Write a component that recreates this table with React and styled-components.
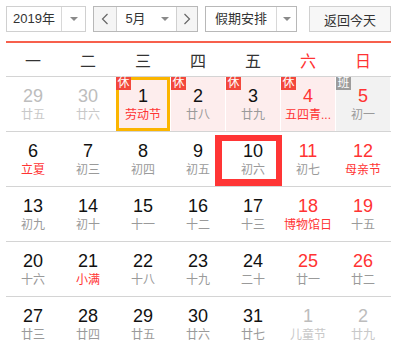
import React from "react";
import styled, { createGlobalStyle, css } from "styled-components";

const GlobalStyle = createGlobalStyle`
  html, body { margin: 0; padding: 0; background: #fff; }
  body {
    font-family: "Liberation Sans", "Noto Sans CJK SC", sans-serif;
    color: #333;
  }
  * { box-sizing: border-box; }
`;

const Wrapper = styled.div`
  width: 396px;
  padding: 6px 5px 0 6px;
`;

const Toolbar = styled.div`
  display: flex;
  align-items: stretch;
  height: 26px;
  width: 385px;
`;

const Select = styled.div`
  display: flex;
  align-items: stretch;
  width: ${(p) => p.$w}px;
  margin-right: ${(p) => p.$mr || 0}px;
  border: 1px solid ${(p) => p.$bc || "#d0d0d0"};
  background: #fff;
  font-size: 13px;
  color: #333;
`;

const SelectText = styled.div`
  flex: 1;
  display: flex;
  align-items: center;
  justify-content: center;
  line-height: 24px;
`;

const ArrowBox = styled.div`
  width: ${(p) => p.$w}px;
  display: flex;
  align-items: center;
  justify-content: center;
  border-left: ${(p) => (p.$divider ? "1px solid #d8d8d8" : "none")};
`;

const Caret = styled.span`
  width: 0;
  height: 0;
  border-left: 4px solid transparent;
  border-right: 4px solid transparent;
  border-top: 4px solid #8a8a8a;
`;

const StepButton = styled.div`
  width: ${(p) => p.$w}px;
  display: flex;
  align-items: center;
  justify-content: center;
  background: #f5f5f5;
  ${(p) => (p.$left ? "border-right: 1px solid #d0d0d0;" : "border-left: 1px solid #d0d0d0;")}
`;

const TodayButton = styled.div`
  margin-left: auto;
  width: 82px;
  border: 1px solid #d0d0d0;
  background: #f7f7f7;
  font-size: 13px;
  color: #333;
  display: flex;
  align-items: center;
  justify-content: center;
`;

const RedLine = styled.div`
  width: 385px;
  height: 2px;
  margin-top: 9px;
  background: #f7604c;
`;

const Grid7 = styled.div`
  display: grid;
  grid-template-columns: repeat(7, 54px);
  column-gap: 1px;
  width: 385px;
`;

const WeekHead = styled(Grid7)`
  height: 33px;
  border-bottom: 1px solid #d4d4d4;
  box-sizing: content-box;
`;

const WeekLabel = styled.div`
  display: flex;
  align-items: center;
  justify-content: center;
  font-size: 16px;
  color: ${(p) => (p.$red ? "#f33" : "#333")};
`;

const WeekRow = styled(Grid7)`
  height: 54px;
  box-sizing: content-box;
  border-top: ${(p) => (p.$first ? "none" : "1px solid #d4d4d4")};
`;

const Cell = styled.div`
  position: relative;
  height: 54px;
  padding-top: 8px;
  display: flex;
  flex-direction: column;
  align-items: center;
  background: ${(p) => (p.$tag === "休" ? "#fdeded" : p.$tag === "班" ? "#f2f2f2" : "transparent")};
  ${(p) =>
    p.$selected &&
    css`
      box-shadow: inset 0 0 0 3px #fbb500;
    `}
`;

const DayNum = styled.div`
  font-family: "Liberation Sans", Arial, sans-serif;
  font-size: 18px;
  line-height: 22px;
  color: ${(p) => (p.$other ? "#bdbdbd" : p.$red ? "#f33" : "#111")};
`;

const Lunar = styled.div`
  text-align: center;
  font-size: 12px;
  line-height: 16px;
  white-space: nowrap;
  color: ${(p) => (p.$other ? "#c8c8c8" : p.$fest ? "#f33" : "#9a9a9a")};
`;

const Badge = styled.span`
  position: absolute;
  top: 0;
  left: 0;
  width: 15px;
  height: 13px;
  font-size: 12px;
  line-height: 13px;
  text-align: center;
  color: #fff;
  background: ${(p) => (p.$tag === "休" ? "#f3473c" : "#9c9c9c")};
`;

const Marker = styled.div`
  position: absolute;
  left: -11px;
  top: 3px;
  width: 67px;
  height: 51px;
  border: 6px solid #ff3535;
  border-left-width: 7px;
  border-bottom-width: 7px;
  pointer-events: none;
`;

const Chevron = ({ dir }) => (
  <svg width="8" height="12" viewBox="0 0 8 12">
    <polyline
      points={dir === "left" ? "6.5,1 1.5,6 6.5,11" : "1.5,1 6.5,6 1.5,11"}
      fill="none"
      stroke="#666"
      strokeWidth="1.2"
    />
  </svg>
);

const weekNames = ["一", "二", "三", "四", "五", "六", "日"];

const d = (n, lunar, opts = {}) => ({ n, lunar, ...opts });

const weeks = [
  [
    d(29, "廿五", { other: true }),
    d(30, "廿六", { other: true }),
    d(1, "劳动节", { fest: true, tag: "休", selected: true }),
    d(2, "廿八", { tag: "休" }),
    d(3, "廿九", { tag: "休" }),
    d(4, "五四青...", { fest: true, tag: "休" }),
    d(5, "初一", { tag: "班" }),
  ],
  [
    d(6, "立夏", { fest: true }),
    d(7, "初三"),
    d(8, "初四"),
    d(9, "初五"),
    d(10, "初六", { marked: true }),
    d(11, "初七"),
    d(12, "母亲节", { fest: true }),
  ],
  [
    d(13, "初九"),
    d(14, "初十"),
    d(15, "十一"),
    d(16, "十二"),
    d(17, "十三"),
    d(18, "博物馆日", { fest: true }),
    d(19, "十五"),
  ],
  [
    d(20, "十六"),
    d(21, "小满", { fest: true }),
    d(22, "十八"),
    d(23, "十九"),
    d(24, "二十"),
    d(25, "廿一"),
    d(26, "廿二"),
  ],
  [
    d(27, "廿三"),
    d(28, "廿四"),
    d(29, "廿五"),
    d(30, "廿六"),
    d(31, "廿七"),
    d(1, "儿童节", { other: true }),
    d(2, "廿九", { other: true }),
  ],
];

export default function App() {
  return (
    <>
      <GlobalStyle />
      <Wrapper>
        <Toolbar>
          <Select $w={80} $mr={7}>
            <SelectText>2019年</SelectText>
            <ArrowBox $w={24} $divider>
              <Caret />
            </ArrowBox>
          </Select>
          <Select $w={105} $mr={7} $bc="#b8b8b8">
            <StepButton $w={23} $left>
              <Chevron dir="left" />
            </StepButton>
            <SelectText>5月</SelectText>
            <ArrowBox $w={22}>
              <Caret />
            </ArrowBox>
            <StepButton $w={21}>
              <Chevron dir="right" />
            </StepButton>
          </Select>
          <Select $w={92} $bc="#b8b8b8">
            <SelectText>假期安排</SelectText>
            <ArrowBox $w={20} $divider>
              <Caret />
            </ArrowBox>
          </Select>
          <TodayButton>返回今天</TodayButton>
        </Toolbar>
        <RedLine />
        <WeekHead>
          {weekNames.map((w, i) => (
            <WeekLabel key={w} $red={i >= 5}>
              {w}
            </WeekLabel>
          ))}
        </WeekHead>
        {weeks.map((week, wi) => (
          <WeekRow key={wi} $first={wi === 0}>
            {week.map((day, di) => {
              const weekend = di >= 5;
              return (
                <Cell key={di} $tag={day.tag} $selected={day.selected}>
                  {day.tag && <Badge $tag={day.tag}>{day.tag}</Badge>}
                  <DayNum $other={day.other} $red={weekend}>
                    {day.n}
                  </DayNum>
                  <Lunar $other={day.other} $fest={day.fest}>
                    {day.lunar}
                  </Lunar>
                  {day.marked && <Marker />}
                </Cell>
              );
            })}
          </WeekRow>
        ))}
      </Wrapper>
    </>
  );
}
